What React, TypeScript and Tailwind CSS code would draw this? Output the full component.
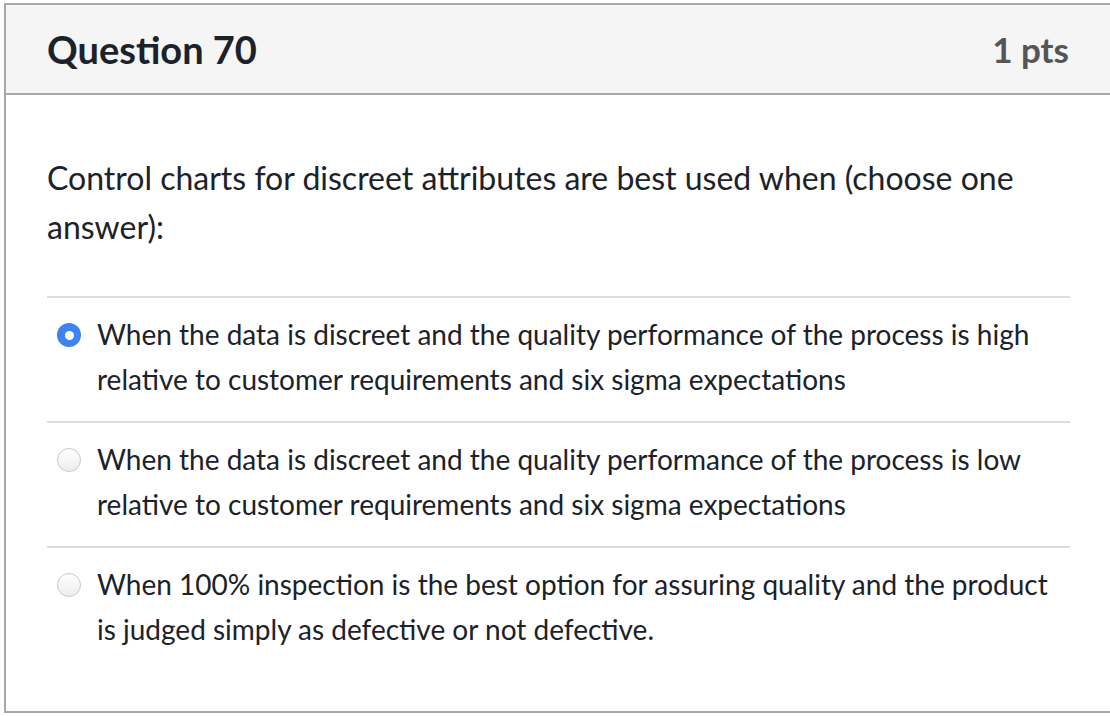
const answers = [
  {
    text: "When the data is discreet and the quality performance of the process is high relative to customer requirements and six sigma expectations",
    selected: true,
  },
  {
    text: "When the data is discreet and the quality performance of the process is low relative to customer requirements and six sigma expectations",
    selected: false,
  },
  {
    text: "When 100% inspection is the best option for assuring quality and the product is judged simply as defective or not defective.",
    selected: false,
  },
];

function Radio({ selected }: { selected: boolean }) {
  if (selected) {
    return (
      <span className="mt-[11px] flex h-[24px] w-[24px] shrink-0 items-center justify-center rounded-full bg-[#3d83f5]">
        <span className="h-[9px] w-[9px] rounded-full bg-white" />
      </span>
    );
  }
  return (
    <span className="mt-[11px] h-[24px] w-[24px] shrink-0 rounded-full border border-[#c8c8c8] bg-gradient-to-b from-white to-[#ededed]" />
  );
}

export default function App() {
  return (
    <div
      className="h-[716px] w-[1110px] overflow-hidden bg-white pl-[4px] pt-[3px] text-[#1c2229]"
      style={{ fontFamily: "Lato, 'Open Sans', sans-serif" }}
    >
      <div className="w-[1110px] border-2 border-[#a8a8a8]">
        {/* Header */}
        <div className="flex h-[90px] items-center justify-between border-b-2 border-[#a8a8a8] bg-[#f5f5f5] px-[41px]">
          <h2 className="text-[38px] font-bold">Question 70</h2>
          <span className="pr-[2px] text-[35px] font-bold text-[#555]">1 pts</span>
        </div>

        {/* Body */}
        <div className="px-[41px] pb-[40px] pt-[58px]">
          <p className="text-[32px] leading-[49px]">
            Control charts for discreet attributes are best used when (choose one answer):
          </p>
          <div className="mt-[45px] w-[1023px]">
            {answers.map((a) => (
              <div
                key={a.text}
                className="flex gap-[16px] border-t-2 border-[#dcdcdc] pb-[19px] pl-[10px] pt-[14px]"
              >
                <Radio selected={a.selected} />
                <span className="text-[28px] leading-[45px]">{a.text}</span>
              </div>
            ))}
          </div>
        </div>
      </div>
    </div>
  );
}
